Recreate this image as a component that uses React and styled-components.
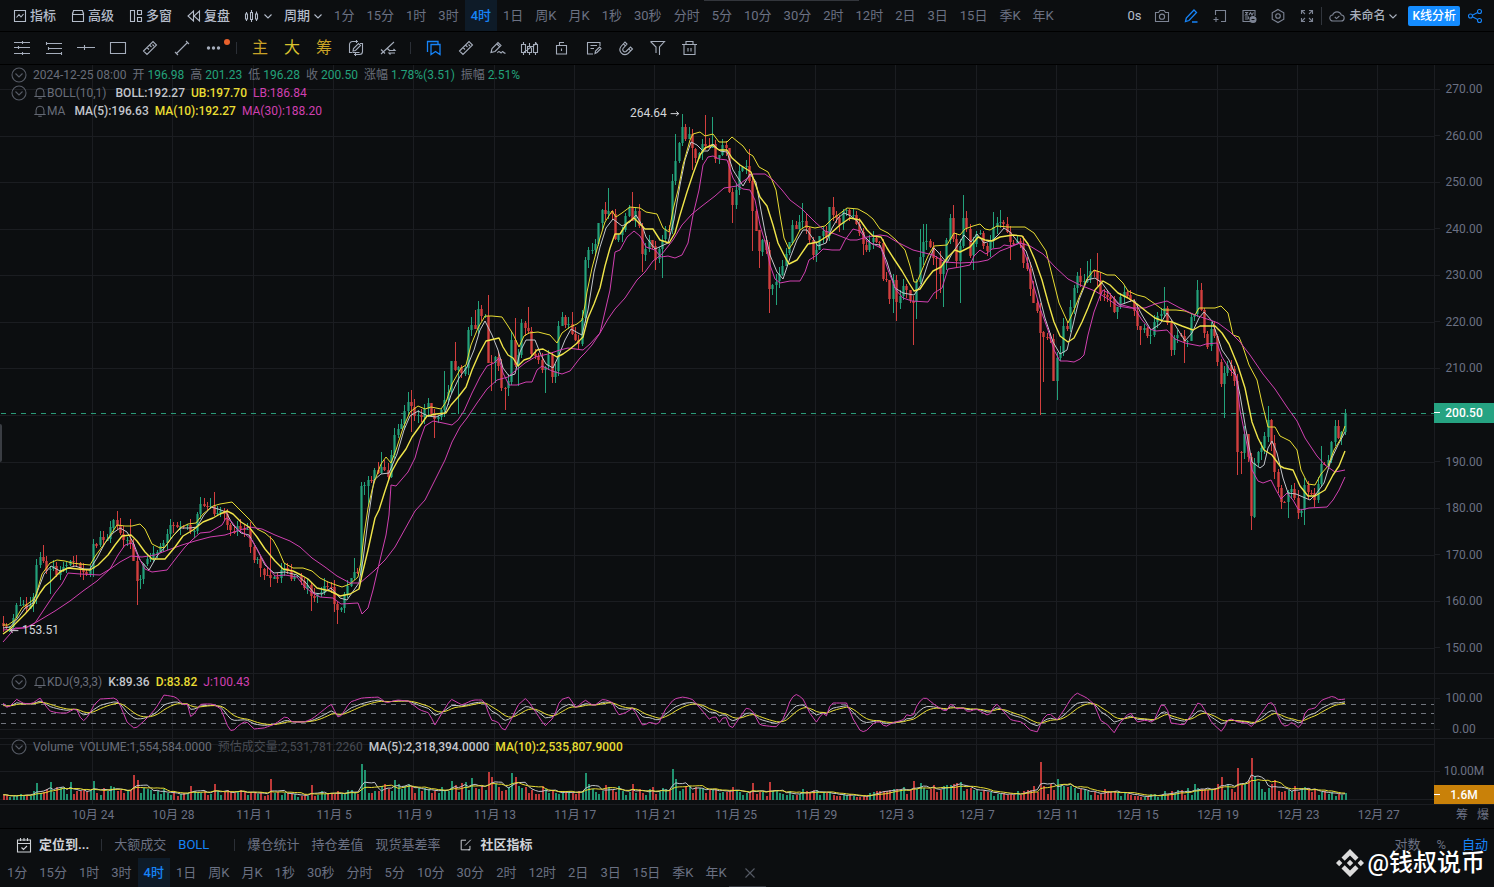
import React, { useState } from "react";
import styled, { createGlobalStyle } from "styled-components";

const GlobalStyle = createGlobalStyle`
    * { box-sizing: border-box; }
    body {
        margin: 0;
        background: #0c0e10;
        font-family: Roboto, "Noto Sans CJK SC", sans-serif;
        font-size: 13px;
        line-height: 18px;
        color: #6b7183;
    }
    button {
        font: inherit;
        color: inherit;
        background: none;
        border: 0;
        padding: 0;
        cursor: pointer;
        white-space: nowrap;
    }
`
const Page = styled.div`
    display: flex;
    flex-direction: column;
    height: 100vh;
    min-height: 500px;
    overflow: hidden;
    position: relative;
`
const TopBar = styled.header`
    display: flex;
    align-items: center;
    height: 32px;
    flex: none;
    padding: 0 11px 0 12px;
    border-bottom: 1px solid #000;
    color: #b4bcca;
`
const MenuGroup = styled.div`
    display: flex;
    align-items: center;
    gap: 14px;
    margin-right: 14px;
`
const MenuButton = styled.button`
    display: flex;
    align-items: center;
    gap: ${props => props.$tight ? 0 : 2}px;
    font-weight: 500;
    font-size: ${props => props.$small ? 12 : 13}px;
`
const DropGroup = styled.div`
    display: flex;
    align-items: center;
    gap: 8px;
    margin-right: 2px;
`
const PeriodList = styled.nav`
    display: flex;
    align-self: stretch;
    color: #6b7183;
`
const PeriodButton = styled.button`
    display: flex;
    align-items: center;
    padding: 0 6px;
    color: ${props => props.$active ? "#1684f8" : "inherit"};
    background: ${props => props.$active ? "#0e1b28" : "none"};
    font-weight: ${props => props.$active ? 500 : 400};
`
const CloseButton = styled(PeriodButton)`
    padding-left: 9px;
    color: #555a64;
`
const TopRight = styled.div`
    display: flex;
    align-items: center;
    margin-left: auto;
    gap: 13px;
`
const IconButton = styled.button`
    display: flex;
    align-items: center;
    justify-content: center;
    color: ${props => props.$color || "#7d8494"};
`
const CloudGroup = styled.div`
    display: flex;
    align-items: center;
    gap: 4px;
    padding-left: 7px;
    border-left: 1px solid #31353c;
    color: #7d8494;
    button { color: #a9b0bd; }
`
const AnalyseButton = styled.button`
    height: 20px;
    padding: 0 4px;
    border-radius: 2px;
    background: #148cff;
    color: #fff;
    font-weight: 500;
    font-size: 12px;
`
const ActionGroup = styled.div`
    display: flex;
    align-items: center;
    gap: 7px;
    margin-left: -7px;
`
const ToolBar = styled.div`
    display: flex;
    align-items: center;
    height: 33px;
    flex: none;
    padding-left: 6px;
    border-bottom: 1px solid #000;
`
const Tool = styled.button`
    position: relative;
    display: flex;
    align-items: center;
    justify-content: center;
    width: 32px;
    height: 32px;
    font-size: 16px;
    color: ${props => props.$color || "#a5adbb"};
`
const RedDot = styled.i`
    position: absolute;
    top: 7px;
    right: 0;
    width: 6px;
    height: 6px;
    border-radius: 50%;
    background: #e8612c;
`
const ToolDivider = styled.div`
    width: 1px;
    height: 12px;
    margin: 0 7px 0 6px;
    background: #2b2f36;
`
const ChartArea = styled.main`
    display: flex;
    flex-direction: column;
    flex: 1;
    min-height: 0;
    font-size: 12px;
`
const Pane = styled.section`
    display: flex;
    flex: ${props => props.$height ? `0 0 ${props.$height}px` : "1 1 0"};
    min-height: 0;
`
const Plot = styled.div`
    position: relative;
    flex: 1;
    min-width: 0;
`
const PlotSvg = styled.svg`
    display: block;
    width: 100%;
    height: 100%;
`
const Axis = styled.div`
    position: relative;
    width: 60px;
    border-left: 1px solid #1b1d21;
    display: grid;
    grid-auto-rows: ${props => props.$row || "1fr"};
    row-gap: ${props => props.$gap || 0}px;
    padding: ${props => props.$pad};
    border-top: ${props => props.$line ? "1px solid #1b1d21" : "0"};
`
const AxisLabel = styled.div`
    display: flex;
    align-items: center;
    padding-right: 6px;
    span { flex: 1; text-align: center; }
    &::before {
        content: "";
        width: 5px;
        height: 1px;
        background: #1b1d21;
    }
`
const ValueTag = styled.div`
    position: absolute;
    left: -1px;
    right: 0;
    top: ${props => props.$top};
    display: flex;
    align-items: center;
    height: ${props => props.$height}px;
    padding-right: 6px;
    background: ${props => props.$color};
    color: #fff;
    font-weight: 500;
    span { flex: 1; text-align: center; }
    &::before {
        content: "";
        width: 6px;
        height: 1px;
        background: #fff;
    }
`
const Legend = styled.div`
    position: absolute;
    top: ${props => props.$top}px;
    left: 11px;
`
const LegendRow = styled.div`
    display: flex;
    align-items: center;
    height: 18px;
    gap: 6px;
    padding-left: ${props => props.$indent ? 22 : 0}px;
    white-space: nowrap;
`
const Fold = styled.button`
    display: flex;
    color: #565b65;
`
const LegendName = styled.span`
    display: flex;
    align-items: center;
    margin-right: ${props => props.$wide ? 3 : 0}px;
    color: #686d79;
`
const LegendValue = styled.span`
    color: ${props => props.$color || "#686d79"};
    font-weight: ${props => props.$bold ? 500 : 400};
    em { font-style: normal; color: #23a27b; }
`
const PriceMark = styled.div`
    position: absolute;
    left: ${props => props.$left};
    top: ${props => props.$top};
    display: flex;
    align-items: center;
    gap: 3px;
    height: 16px;
    color: #d4d6da;
`
const SideHandle = styled.div`
    position: absolute;
    left: 0;
    top: 59%;
    width: 2px;
    height: 38px;
    border-radius: 0 2px 2px 0;
    background: #3a3d43;
`
const TimeAxis = styled.div`
    display: flex;
    align-items: center;
    height: 25px;
    flex: none;
    border-top: 1px solid #1b1d21;
    border-bottom: 1px solid #000;
    padding: 0 0 3px 53px;
`
const TimeLabels = styled.div`
    flex: 1;
    display: grid;
    grid-template-columns: repeat(17, 1fr);
    text-align: center;
    margin-right: 15px;
`
const TimeExtra = styled.div`
    display: flex;
    justify-content: flex-end;
    gap: 9px;
    width: 60px;
    padding-right: 5px;
`
const Footer = styled.footer`
    height: 58px;
    flex: none;
`
const FooterRow = styled.div`
    display: flex;
    align-items: center;
    height: 29px;
    padding: 2px 6px 0 16px;
    gap: 12px;
`
const FooterPeriods = styled.div`
    display: flex;
    height: 29px;
    padding-left: 1px;
`
const FooterLink = styled.button`
    display: flex;
    align-items: center;
    gap: 7px;
    margin-left: ${props => props.$apart ? 7 : 0}px;
    font-weight: ${props => props.$bold ? 700 : 400};
    color: ${props => props.$bold ? "#d0d3d8" : props.$active ? "#1684f8" : "inherit"};
`
const FooterDivider = styled.div`
    width: 1px;
    height: 12px;
    margin-left: ${props => props.$wide ? 13 : 0}px;
    background: #2b2f36;
`
const ScaleGroup = styled.div`
    display: flex;
    gap: 16px;
    margin-left: auto;
`
const ScrollThumb = styled.i`
    position: absolute;
    left: ${props => props.$left};
    width: ${props => props.$width}px;
    height: 1px;
    background: #33363c;
    ${props => props.$bottom ? "bottom: 0;" : "top: 0;"}
`
const Watermark = styled.div`
    position: absolute;
    right: 9px;
    bottom: 7px;
    display: flex;
    align-items: center;
    gap: 3px;
    height: 34px;
    font-size: 24px;
    font-weight: 500;
    color: #fff;
    pointer-events: none;
`

const PERIODOS = ["1分", "15分", "1时", "3时", "4时", "1日", "周K", "月K", "1秒", "30秒", "分时", "5分", "10分", "30分", "2时", "12时", "2日", "3日", "15日", "季K", "年K"]
const DATAS = ["10月 24", "10月 28", "11月 1", "11月 5", "11月 9", "11月 13", "11月 17", "11月 21", "11月 25", "11月 29", "12月 3", "12月 7", "12月 11", "12月 15", "12月 19", "12月 23", "12月 27"]
const PRECOS = [270, 260, 250, 240, 230, 220, 210, 200, 190, 180, 170, 160, 150]

const WHITE = "#c3c6cc"
const YELLOW = "#e9dd33"
const PINK = "#d040b0"
const GREEN = "#23a27b"
const RED = "#d33f3e"
const GRID = "#1b1d21"

// x,y pairs of each curve
const parse = text => text.trim().split(/\s+/).map(p => p.split(",").map(Number))

const CLOSE = parse(`
4,627 8,629 12,622 16,604 20,606 28,606 33,600 36,568 40,558 43,559 47,572 50,570 53,567 57,573 62,570 66,565 72,564 76,563 80,572 84,573 88,571 91,568 93,542 97,547 100,537 104,541 108,537 112,523 116,520 119,530 122,541 126,540 130,539 134,560 137,579 141,576 145,562 150,560 155,549 160,549 165,539 170,528 174,523 178,525 182,529 188,526 192,536 196,520 200,502 204,508 208,503 213,508 216,516 219,510 223,508 227,524 231,532 235,530 239,529 243,528 247,527 250,546 255,561 259,562 264,572 269,580 273,577 277,577 281,570 285,567 290,579 295,576 300,580 304,588 308,584 312,600 316,592 320,590 325,588 330,583 333,599 337,611 341,608 345,593 350,580 354,572 357,578 360,572 361,485
364,488 368,477 371,479 375,470 379,474 383,466 388,478 392,450 395,432 399,430 403,418 407,400 410,402 413,414 418,416 422,414 426,407 430,404 433,422 437,421 441,413 445,401 449,391 452,356 455,370 459,367 463,375 466,368 468,332 472,327 475,329 478,311 481,318 485,312 488,362 492,363 496,353 500,370 503,398 506,388 509,379 512,337 515,366 519,352 522,325 526,330 530,333 533,363 536,351 540,365 544,372 548,350 552,376 556,374 558,329 562,315 566,327 570,325 573,341 577,340 581,341 585,262
588,250 592,252 597,240 601,208 604,215 608,210 612,213 616,245 620,235 624,228 628,205 632,224 636,212 640,230 643,258 647,245 651,238 654,261 658,253 662,240 666,226 669,230 672,187 675,163 678,152 682,123 685,140 689,136 693,152 697,163 700,149 704,143 708,153 712,138 715,162 718,160 722,142 726,150 729,188 733,208 737,187 740,168 744,170 748,168 752,205 756,230 759,256 763,241 766,248 769,286 773,287 777,280 781,272 785,258 788,254 792,226 796,232 800,218 803,220 807,231 811,244 814,261 818,245 822,225 826,239 829,203 832,215 836,214 840,223 845,208 849,214 853,216 857,228 861,236 866,250 871,240 876,239 880,243 883,282 887,281 890,299 894,278 897,303 901,295 905,284 910,298 913,307 916,290 920,256 924,239 928,242 933,257 937,260 941,278
946,243 950,219 953,233 957,260 960,247 963,219 967,228 970,255 974,240 977,235 981,232 985,252 988,247 992,237 994,222 998,221 1002,226 1005,222 1009,240 1013,245 1017,240 1021,243 1024,267 1028,266 1031,292 1035,305 1038,313 1041,337 1045,340 1048,335 1052,345 1054,385 1057,360 1061,350 1064,325 1068,330 1071,302 1075,280 1079,276 1082,283 1085,280 1089,274 1092,271 1096,274 1099,290 1103,296 1107,295 1111,300 1115,318 1119,304 1123,294 1127,294 1132,300 1136,315 1139,332 1143,324 1148,335 1151,332 1155,317 1159,315 1163,307 1167,317 1171,349 1175,336 1180,332 1184,343 1188,341 1191,315 1194,322 1197,287 1200,300 1204,330 1208,345 1211,332 1215,333 1218,363 1221,386 1224,374 1229,361 1232,372 1236,385
1238,454 1241,453 1245,432 1248,456 1251,527 1254,465 1258,452 1262,446 1264,442 1268,420 1272,450 1276,480 1280,500 1284,503 1288,492 1291,485 1294,495 1297,510 1300,515 1303,502 1306,480 1310,498 1313,490 1316,503 1319,475 1322,461 1326,465 1330,452 1334,425 1338,437 1342,430 1345,413`)

// candles with long shadows: x,y of the tip
const WICKS = parse(`
44,545 49,594 117,511 137,605 141,589 130,519 202,497 213,492 270,536 272,587 311,611 338,624 354,558 364,495 368,505 381,452 408,392 411,390 413,432 434,438 445,371 455,342 459,414 474,310 478,301 488,295 491,391 495,383 504,410 515,318 518,386 528,307 545,393 552,383 562,312 571,312 608,188 632,192 642,272 655,270 662,278 675,134 682,114 705,115 712,117 693,170 732,223 749,149 753,251 759,268 769,313 775,305 802,203 832,197 862,255 893,313 897,321 913,345 916,319 920,229 923,224 926,224 936,299 940,293 943,307 953,205 959,303 963,195 973,270 993,212 1000,210 1011,260 1040,415 1043,382 1057,400 1087,261 1091,259 1097,253 1140,345 1164,287 1184,363 1197,280 1201,283 1224,418 1237,475 1241,474 1251,530 1267,406 1277,493 1287,518 1304,525 1322,446 1334,420 1345,409`)

const UPPER = parse(`
3,625 8,625 15,620 22,608 33,600 36,595 42,574 50,563 57,560 65,561 72,563 80,564 90,565 96,555 105,543 117,525 125,526 132,526 140,524 145,529 152,544 160,548 165,547 172,537 180,528 188,524 196,523 203,514 213,506 220,504 226,503 232,502 242,512 250,520 257,529 265,533 273,540 278,549 284,563 293,568 303,568 312,571 320,578 328,582 336,585 342,587 350,584 358,577 361,562 364,535 368,508 372,490 375,480 381,464 386,457 391,463 396,450 403,428 410,412 418,406 425,409 431,407 441,409 446,402 452,384 461,368 466,365 471,345 478,328 485,316 492,316 502,317 508,326 513,334 519,347 524,336 529,333 538,332 550,335 557,343 562,333 570,327 577,324 582,320 585,305 587,292 592,268 600,238 605,222 612,211 616,217 622,213 630,207 640,208 646,212 657,214 663,228 669,232 673,210 678,190 683,165 690,140 693,134 700,132 705,136 713,134 719,142 727,142 732,137 738,142 743,146 748,153 753,156 759,167 768,172 772,180 776,190 780,215 784,238 789,249 795,240 800,230 806,226 815,228 825,226 832,219 838,215 847,208 858,209 867,214 873,219 880,229 888,233 896,240 905,250 910,266 914,282 917,282 922,270 928,256 934,246 947,245 954,233 960,235 965,229 973,226 980,224 985,229 990,230 997,226 1008,227 1025,227 1034,233 1040,242 1046,251 1052,275 1059,303 1068,323 1074,310 1080,295 1087,279 1094,270 1100,272 1107,275 1115,275 1123,283 1128,291 1137,295 1145,297 1155,304 1163,310 1176,310 1185,311 1195,315 1199,308 1215,308 1221,306 1228,313 1233,335 1239,337 1243,347 1249,365 1257,380 1262,403 1268,427 1275,427 1280,436 1290,441 1297,450 1301,470 1308,484 1315,485 1321,474 1328,466 1334,450 1340,440 1345,426`)

const MA10 = parse(`
3,634 10,629 18,621 25,614 33,605 40,593 45,586 50,582 60,572 68,568 78,569 90,570 98,565 108,555 115,545 122,536 131,535 137,541 145,552 152,559 165,559 175,547 183,536 193,530 203,522 213,518 220,514 227,511 233,514 241,522 249,527 257,537 265,549 275,561 283,569 293,571 301,575 308,579 317,588 330,591 340,596 350,594 359,589 362,575 368,550 375,518 379,510 385,491 391,473 398,460 406,449 412,437 420,426 427,416 436,414 446,413 451,405 459,396 466,387 472,370 479,354 486,341 499,338 503,347 508,355 513,358 518,366 524,360 530,358 537,350 543,349 550,353 557,357 563,354 570,349 576,344 583,337 588,318 594,304 600,288 605,266 610,248 615,234 620,234 627,223 634,218 645,229 653,229 660,240 669,243 675,233 680,215 687,192 693,174 700,155 705,148 712,145 719,150 727,150 732,158 740,165 751,172 755,183 760,197 767,206 773,225 778,243 785,257 789,264 797,260 808,244 818,242 829,235 840,225 850,218 860,220 867,230 873,236 881,237 887,248 894,259 902,271 909,283 914,291 920,289 926,280 933,271 941,267 948,257 955,250 960,252 970,247 978,237 985,240 992,241 1000,237 1013,235 1022,236 1028,244 1035,260 1042,280 1048,302 1054,322 1060,336 1068,342 1074,338 1082,322 1088,308 1095,290 1103,281 1110,285 1118,293 1128,298 1137,304 1147,312 1155,318 1163,321 1172,322 1182,326 1193,330 1200,326 1215,326 1222,333 1229,344 1238,366 1245,388 1252,422 1258,438 1264,450 1272,455 1280,466 1284,468 1293,470 1300,486 1308,496 1315,496 1325,490 1333,475 1339,466 1345,451`)

const MA5 = parse(`
3,628 10,627 18,618 25,608 33,603 38,590 44,574 51,566 60,571 68,568 75,566 84,569 90,569 97,558 105,543 113,533 120,528 127,532 133,542 140,560 149,570 157,556 165,547 173,536 181,528 190,528 197,527 204,515 211,507 218,509 226,512 233,525 241,533 249,535 257,549 265,565 274,573 285,572 297,575 306,583 314,593 322,594 331,588 340,598 347,600 354,590 359,583 363,560 368,520 374,480 381,474 389,473 397,454 404,430 410,416 418,411 428,416 436,417 445,413 451,395 459,378 467,367 474,350 480,330 485,321 492,335 498,350 503,368 509,376 515,374 520,352 526,340 535,340 541,355 546,364 553,368 559,355 565,340 571,329 578,333 582,335 588,310 594,272 600,247 606,228 613,219 622,226 630,222 636,215 642,225 646,237 655,249 668,243 674,220 680,185 685,160 691,142 697,145 703,151 708,151 713,144 720,151 727,152 733,170 743,186 750,174 756,182 760,205 765,232 770,255 777,272 783,279 790,258 797,240 803,230 807,230 818,246 826,243 832,228 838,218 844,213 851,216 858,222 865,237 872,244 880,245 887,262 895,288 903,293 914,295 921,285 928,263 934,248 938,252 947,263 953,252 960,242 964,235 971,242 977,234 984,243 993,240 999,234 1004,228 1010,232 1018,242 1026,251 1032,268 1038,290 1045,318 1053,342 1060,354 1067,350 1073,325 1079,300 1087,280 1095,278 1102,283 1110,294 1120,305 1128,302 1134,300 1142,315 1151,330 1160,324 1167,313 1175,325 1185,341 1192,333 1199,318 1204,312 1212,321 1218,338 1222,350 1229,360 1236,376 1240,395 1246,430 1252,462 1260,468 1264,465 1268,448 1272,441 1277,453 1283,478 1288,493 1296,494 1303,497 1310,500 1316,494 1324,483 1331,460 1338,445 1345,432`)

const LOWER = parse(`
3,642 10,634 15,628 25,628 35,623 45,608 55,593 62,584 68,573 80,574 100,575 110,569 118,555 125,545 132,543 138,556 145,569 152,572 167,570 177,557 185,547 192,540 200,533 210,532 222,525 226,518 231,521 238,530 245,534 252,540 258,551 266,565 275,576 285,575 297,577 304,586 311,592 320,597 333,598 341,604 358,603 362,614 368,608 373,590 380,560 386,535 389,515 391,485 396,486 408,472 415,458 420,440 425,426 433,421 443,423 452,425 458,420 464,411 472,393 480,377 487,366 494,363 499,358 503,373 509,385 517,385 526,382 532,382 537,370 542,366 552,371 562,374 570,371 580,358 585,353 592,345 600,333 610,290 615,252 620,250 627,237 634,231 640,236 646,247 655,250 661,257 668,256 675,258 682,255 688,243 693,215 699,190 703,165 708,157 713,156 719,159 727,160 733,178 738,186 743,189 750,190 755,200 760,225 766,245 770,265 775,279 780,283 790,281 800,281 805,272 809,260 817,255 823,249 832,250 840,250 845,240 853,229 860,231 867,241 873,244 881,248 888,270 896,290 903,298 912,301 928,302 934,293 942,288 948,269 960,267 970,265 974,256 980,250 986,254 992,249 1000,248 1004,245 1010,246 1020,243 1026,257 1032,280 1040,308 1048,330 1054,350 1060,361 1067,361 1074,362 1080,359 1084,355 1088,335 1094,312 1100,296 1103,290 1110,294 1118,304 1130,307 1135,309 1142,320 1150,329 1156,331 1167,330 1175,339 1185,343 1200,346 1206,344 1217,343 1222,357 1230,370 1236,376 1240,410 1246,440 1252,470 1258,481 1263,483 1271,480 1276,490 1281,499 1287,493 1293,500 1298,509 1301,510 1309,508 1327,507 1333,500 1339,490 1345,477`)

const MA30 = parse(`
3,630 15,629 28,627 40,620 55,611 70,601 83,591 97,581 110,569 120,562 131,556 142,557 155,555 168,550 182,545 195,541 210,537 225,535 240,530 250,527 262,529 275,535 290,541 300,547 312,558 325,567 337,576 350,583 360,583 375,570 385,560 395,547 400,538 410,520 415,511 425,500 435,480 445,460 452,442 460,427 467,418 477,403 487,389 497,380 508,377 515,371 525,363 535,357 548,354 560,350 568,348 583,350 590,344 600,333 608,319 615,309 625,298 637,280 645,272 653,261 662,254 673,240 682,225 692,214 702,206 715,196 724,188 737,186 745,180 753,174 765,174 773,180 782,190 790,200 802,209 815,222 825,231 835,234 850,240 857,240 867,237 880,235 887,236 897,242 907,247 913,250 933,255 945,262 960,263 978,262 988,260 1000,251 1008,248 1020,243 1030,246 1043,254 1055,267 1068,279 1080,285 1095,291 1108,299 1118,306 1130,308 1145,308 1155,304 1167,301 1180,308 1195,315 1210,320 1218,323 1230,332 1240,342 1250,355 1263,374 1275,389 1287,407 1297,421 1305,438 1317,456 1325,465 1335,472 1345,470`)

const KDJ_J = parse(`
4,703 5,708 10,706 13,703 17,699 22,703 29,704 33,703 40,698 45,705 50,711 58,713 67,713 76,708 80,717 84,721 89,715 94,705 100,699 116,698 121,707 127,722 135,729 143,722 150,715 156,708 164,695 176,697 183,705 188,704 191,718 201,704 213,704 221,709 228,727 232,732 239,725 246,721 254,729 264,728 275,724 286,716 292,722 304,722 312,719 321,712 331,704 339,719 350,702 362,698 379,697 386,703 397,700 408,701 420,710 429,713 435,725 442,713 451,699 462,705 473,700 484,700 491,720 498,722 504,732 511,720 518,705 526,698 533,708 545,726 554,717 560,700 569,697 576,708 585,700 594,706 603,699 612,702 618,715 625,713 633,708 643,726 650,722 658,725 665,710 674,699 683,697 692,699 700,708 710,720 715,715 719,723 725,715 731,730 738,720 747,707 753,712 760,725 776,727 784,718 791,698 797,694 804,700 809,712 817,723 822,712 826,717 831,703 847,703 852,717 861,732 866,731 875,722 880,722 885,727 892,723 903,720 908,713 912,718 918,703 925,697 935,705 946,712 951,703 958,710 962,707 968,712 976,709 989,716 996,703 1004,712 1011,720 1022,722 1030,730 1038,732 1042,720 1049,713 1057,720 1064,710 1072,697 1077,693 1087,698 1095,705 1100,720 1108,725 1114,733 1120,723 1130,712 1137,722 1146,720 1153,723 1162,703 1167,708 1171,723 1184,725 1191,715 1199,701 1206,712 1212,723 1222,732 1229,718 1238,722 1247,723 1252,727 1260,715 1270,701 1275,707 1280,722 1286,727 1292,722 1300,729 1306,710 1315,708 1322,700 1333,696 1339,700 1345,699`)

const VOLUME_BASE = parse(`4,4 25,5 40,10 90,10 130,12 160,8 220,9 300,5 350,9 380,14 420,11 450,15 500,16 540,11 575,6 600,12 640,9 680,12 720,9 740,7 800,9 850,5 880,7 920,12 960,13 1000,6 1030,10 1060,13 1090,9 1140,5 1180,8 1230,14 1260,15 1290,11 1345,7`)
const VOLUME_PEAKS = parse(`37,17 50,18 70,18 93,19 133,25 136,20 191,14 213,16 271,21 311,15 361,36 364,30 395,20 451,19 471,22 488,28 491,23 512,27 515,23 585,27 588,16 633,16 672,31 675,21 732,13 753,17 769,18 913,19 920,17 953,16 960,18 1033,14 1040,38 1057,21 1194,16 1221,23 1238,32 1251,42 1254,24 1257,18 1274,20 1304,13`)

const TOTAL = 402
const STEP = 3.346
const barX = i => 3.3 + i * STEP
const barAt = x => Math.min(TOTAL - 1, Math.round((x - 3.3) / STEP))

const noise = n => {
    const v = Math.sin(n * 12.9898 + 4.1) * 43758.5453
    return v - Math.floor(v)
}
const valueAt = (points, x) => {
    if (x <= points[0][0]) return points[0][1]
    for (let i = 1; i < points.length; i++) {
        const [x1, y1] = points[i]
        if (x <= x1) {
            const [x0, y0] = points[i - 1]
            return y0 + (y1 - y0) * (x - x0) / (x1 - x0)
        }
    }
    return points[points.length - 1][1]
}

const bars = Array.from({ length: TOTAL }, (_, i) => {
    const close = valueAt(CLOSE, barX(i)) + (i < TOTAL - 1 ? (noise(i) - 0.5) * 6 : 0)
    return { x: Math.floor(barX(i)), close }
})
bars.forEach((bar, i) => {
    bar.open = i ? bars[i - 1].close : bar.close - 3
    bar.up = bar.close < bar.open
    bar.high = Math.min(bar.open, bar.close) - noise(i + 900) * 8
    bar.low = Math.max(bar.open, bar.close) + noise(i + 500) * 8
    bar.volume = valueAt(VOLUME_BASE, barX(i)) * (0.5 + noise(i + 77) * 0.85)
})
WICKS.forEach(([x, y]) => {
    const bar = bars[barAt(x)]
    if (y < (bar.open + bar.close) / 2) bar.high = y
    else bar.low = y
})
VOLUME_PEAKS.forEach(([x, h]) => { bars[barAt(x)].volume = h })

const wickPath = up => bars.filter(b => b.up === up).map(b => `M${b.x + 0.5} ${Math.round(b.high)}V${Math.round(b.low)}`).join("")
const bodyPath = up => bars.filter(b => b.up === up).map(b => {
    const top = Math.round(Math.min(b.open, b.close))
    return `M${b.x - 1} ${top}h3v${Math.max(1, Math.round(Math.abs(b.open - b.close)))}h-3z`
}).join("")
const volumePath = up => bars.filter(b => b.up === up).map(b => `M${b.x} 800h2v-${Math.max(2, Math.round(b.volume))}h-2z`).join("")

const average = size => bars.map((b, i) => {
    const part = bars.slice(Math.max(0, i - size + 1), i + 1)
    return [barX(i), 800 - part.reduce((sum, p) => sum + p.volume, 0) / part.length]
})

// D comes from smoothing, K = (J + 2D) / 3
const kdj = { j: [], k: [], d: [] }
let lastD = 706
bars.forEach((b, i) => {
    const x = barX(i)
    const j = valueAt(KDJ_J, x)
    lastD = (6 * lastD + j) / 7
    kdj.j.push([x, j])
    kdj.d.push([x, lastD])
    kdj.k.push([x, (j + 2 * lastD) / 3])
})

const Curve = ({ points, color, width = 1 }) => (
    <polyline points={points.map(p => `${p[0]},${p[1].toFixed(1)}`).join(" ")} fill="none" stroke={color} strokeWidth={width} strokeLinejoin="round" vectorEffect="non-scaling-stroke" />
)

const Grid = ({ top, bottom, lines }) => (
    <path
        d={DATAS.map((_, i) => `M${Math.round(92 + i * 80.33) + 0.5} ${top}V${bottom}`).join("") + lines.map(y => `M0 ${y + 0.5}H1434`).join("")}
        stroke={GRID}
        fill="none"
        shapeRendering="crispEdges"
    />
)

const ICONS = {
    indicator: <path d="M2.500 2.500h11v11h-11zM4.500 9.500l2.500-3 2 2.500 2.500-3" />,
    box: <path d="M2.500 6.500h11v7h-11zM2.500 6.500l1-4h9l1 4M2.500 4.500v2M13.500 4.500v2" />,
    windows: <path d="M2.500 2.500h4v11h-4zM9.500 2.500h4v4h-4zM9.500 9.500h4v4h-4z" />,
    rewind: <path d="M7.500 3v10L2 8zM13.500 3v10L8 8z" />,
    candles: <path d="M1.500 6h2v5h-2zM2.500 4v2M2.500 11v2M6.500 4.500h2v7h-2zM7.500 2v2.500M7.500 11.500V14M11.500 6h2v5h-2zM12.500 3.500V6M12.500 11v2" />,
    chevron: <path d="M4.500 6.500L8 10l3.500-3.500" />,
    camera: <><path d="M1.500 4.500h3L6 2.500h4l1.500 2h3v9h-13z" /><circle cx="8" cy="8.700" r="2.600" /></>,
    pencil: <path d="M2.500 13.500l.8-3.500L11 2l2.500 2.500-7.500 8zM9 14h5.500" strokeWidth="1.300" />,
    addPane: <path d="M3.500 7V2.500h10v11H9M1.500 11.500h5M4 9v5" />,
    list: <><path d="M14 8V2.500H2v11h7M4 4.500h2.500L4.500 7H7M8 7l1.500-2.500L11 7l1.500-2.500M4 9h4M4 11h3l1-1.500" /><circle cx="12" cy="11.500" r="3" fill="currentColor" /><path d="M10.500 11.500h3" stroke="#0c0e10" /></>,
    hexagon: <><path d="M8 1.500l5.800 3.300v6.400L8 14.500l-5.800-3.300V4.800z" /><circle cx="8" cy="8" r="2.300" /></>,
    expand: <path d="M2.500 6V2.500H6M2.500 2.500l3.500 3.500M10 2.500h3.500V6M13.500 2.500L10 6M2.500 10v3.500H6M2.500 13.500L6 10M10 13.500h3.500V10M13.500 13.500L10 10" />,
    cloud: <path d="M4 13a3 3 0 0 1-.3-6 4.500 4.500 0 0 1 8.600 0A3 3 0 0 1 12 13zM5.800 9l1.700 1.600L10.400 8" />,
    share: <><circle cx="3.500" cy="8" r="2" /><circle cx="12.500" cy="3.500" r="2" /><circle cx="12.500" cy="12.500" r="2" /><path d="M5.300 7.200l5.400-2.800M5.300 8.800l5.400 2.800" /></>,
    threeLines: <path d="M0 2.500h16M0 7.500h16M0 13.500h16M8.500 1v3M4.500 6v3M8.500 12v3" />,
    rays: <path d="M0 3.500h16M2 8.500h14M0 13.500h16M.5 2v3M2.500 7v3M15.500 12v3" />,
    level: <path d="M-1 7.500h18M6.500 5v5" />,
    rect: <path d="M.5 2.500h15v11H.5z" />,
    ruler: <path d="M1.500 11L11 1.500 14.500 5 5 14.500zM7.500 5l2 2M5 7.500l2 2M10.500 4.500l1.500 1.500" />,
    segment: <path d="M2.500 13.500l11-11M1 12l3 3M12 1l3 3" />,
    dots: <g fill="currentColor" stroke="none"><circle cx="2.500" cy="8" r="1.700" /><circle cx="7.500" cy="8" r="1.700" /><circle cx="12.500" cy="8" r="1.700" /></g>,
    loopEdit: <path d="M4 12.500H1.500v-8a3 3 0 0 1 3-3H10M8.500 0v3M12 3.500h2.500v8a3 3 0 0 1-3 3H6M7.500 13v3M5 11l.5-2.500 5-5 2 2-5 5zM4.500 12.500h7" />,
    swapLine: <path d="M1 14L14 2M1 9.500l4 4M7 8l3 3M9 10.500h6l-1.500-1.500M15 13H9l1.500 1.500" />,
    bookmark: <path d="M5 4.500h9v10l-4.500-3-4.500 3zM1.500 12V1.500H12V4" strokeWidth="1.300" />,
    scribble: <path d="M1 12.500l1-4 6-6 3 3-6 6zM7 4l3 3M7.500 13c2-4 3 2 4.500-1 1-2 1.500 2 3.500 1" />,
    compare: <path d="M-.5 4.500h4v8h-4zM1.500 2v2.500M1.500 12.500v2.500M5.500 6.500h4v6h-4zM7.500 3v3.500M7.500 12.500v2.500M11.500 4.500h4v8h-4zM13.500 2v2.500M13.500 12.500v2.500M2 12L15 3" />,
    lock: <path d="M2.500 5.500h10v8.500h-10zM5.500 5.500v-3H10M7.500 8.500v2.500" />,
    note: <path d="M14 6V2.500H1.500v11.500H7M4.500 5.500h6.500M4.500 8.500h3.500M9 13.500l.5-2.500 4-4 1.500 1.500-4 4z" />,
    magnet: <path d="M7 2L3 6.500a5 5 0 0 0 7 7L14.500 9l-2-2L8 11.500A2.200 2.200 0 0 1 5 8.500L9 4zM5.500 4l2 1.800M11 9l1.800 2" />,
    filter: <path d="M.5 1.500h14L9.500 7v8M.5 1.500L6 7v6" />,
    trash: <path d="M0 4.500h15M4 4.500v-3h7v3M2 4.500v10h11v-10M6 8v3.500M9 8v3.500" />,
    fold: <><circle cx="8" cy="8" r="7" /><path d="M4.500 6.500L8 10l3.500-3.500" /></>,
    bell: <path d="M1.500 12h13M3.500 12V7a4.500 4.500 0 0 1 9 0v5M6 14h4" />,
    calendar: <path d="M1.500 3h13v12h-13zM1.500 6.500h13M4.500 1v3M8 1v3M11.500 1v3M5.500 10.500l2 2 3.500-3.500" />,
    external: <path d="M8 2.500H2.500v11h10V9M7 8.500L13.500 2M10.500 13.500h2" />,
    close: <path d="M3.500 3.500l9 9M12.500 3.500l-9 9" />,
    arrowRight: <path d="M1 9h13M10 5.500L14 9l-4 3.500" strokeWidth="1.600" />,
    arrowLeft: <path d="M15 9H2M6 5.500L2 9l4 3.500" strokeWidth="1.600" />,
}
const Icon = ({ name, size = 16 }) => (
    <svg width={size} height={size} viewBox="0 0 16 16" fill="none" stroke="currentColor" strokeWidth="1.100" overflow="visible" aria-hidden="true">
        {ICONS[name]}
    </svg>
)

const TOOLS = [
    ["threeLines", "rays", "level", "rect", "ruler", "segment", "dots"],
    ["主", "大", "筹", "loopEdit", "swapLine"],
    ["bookmark", "ruler", "scribble", "compare", "lock", "note", "magnet", "filter", "trash"],
]
const toolColor = name => {
    if (name === "bookmark") return "#1684f8"
    if (name === "大") return "#d9c22e"
    return ICONS[name] ? undefined : "#c9a227"
}

const Periods = ({ active, onPick }) => PERIODOS.map(name => (
    <PeriodButton key={name} type="button" $active={name === active} onClick={() => onPick(name)}>{name}</PeriodButton>
))

const Header = ({ period, setPeriod }) => (
    <TopBar>
        <MenuGroup>
            <MenuButton type="button"><Icon name="indicator" />指标</MenuButton>
            <MenuButton type="button"><Icon name="box" />高级</MenuButton>
            <MenuButton type="button"><Icon name="windows" />多窗</MenuButton>
            <MenuButton type="button"><Icon name="rewind" />复盘</MenuButton>
        </MenuGroup>
        <DropGroup>
            <MenuButton type="button" aria-label="K线" $tight><Icon name="candles" /><Icon name="chevron" /></MenuButton>
            <MenuButton type="button" $tight>周期<Icon name="chevron" /></MenuButton>
        </DropGroup>
        <PeriodList><Periods active={period} onPick={setPeriod} /></PeriodList>
        <TopRight>
            <span>0s</span>
            <IconButton type="button" aria-label="camera"><Icon name="camera" /></IconButton>
            <IconButton type="button" aria-label="draw" $color="#1684f8"><Icon name="pencil" /></IconButton>
            <IconButton type="button" aria-label="add"><Icon name="addPane" /></IconButton>
            <IconButton type="button" aria-label="list"><Icon name="list" /></IconButton>
            <IconButton type="button" aria-label="settings"><Icon name="hexagon" /></IconButton>
            <IconButton type="button" aria-label="fullscreen"><Icon name="expand" /></IconButton>
            <ActionGroup>
                <CloudGroup>
                    <Icon name="cloud" />
                    <MenuButton type="button" $small $tight>未命名<Icon name="chevron" /></MenuButton>
                </CloudGroup>
                <AnalyseButton type="button">K线分析</AnalyseButton>
                <IconButton type="button" aria-label="share" $color="#1684f8"><Icon name="share" /></IconButton>
            </ActionGroup>
        </TopRight>
    </TopBar>
)

const DrawTools = () => (
    <ToolBar>
        {TOOLS.map((group, i) => (
            <React.Fragment key={i}>
                {i > 0 && <ToolDivider />}
                {group.map(name => (
                    <Tool key={name} type="button" aria-label={name} $color={toolColor(name)}>
                        {ICONS[name] ? <Icon name={name} /> : name}
                        {name === "dots" && <RedDot />}
                    </Tool>
                ))}
            </React.Fragment>
        ))}
    </ToolBar>
)

const FoldButton = () => <Fold type="button" aria-label="fold"><Icon name="fold" /></Fold>

const MainPane = () => (
    <Pane>
        <Plot>
            <PlotSvg viewBox="0 65 1434 608" preserveAspectRatio="none">
                <Grid top={65} bottom={673} lines={PRECOS.map((_, i) => Math.round(89 + i * 46.58))} />
                <path d="M1 413.500H1434" stroke="#2b9a78" strokeDasharray="5 5" shapeRendering="crispEdges" />
                <g shapeRendering="crispEdges">
                    <path d={bodyPath(true)} fill={GREEN} opacity="0.600" />
                    <path d={bodyPath(false)} fill={RED} opacity="0.700" />
                    <path d={wickPath(true)} stroke={GREEN} />
                    <path d={wickPath(false)} stroke={RED} />
                </g>
                <Curve points={MA5} color={WHITE} />
                <Curve points={UPPER} color={YELLOW} />
                <Curve points={LOWER} color={PINK} />
                <Curve points={MA30} color={PINK} />
                <Curve points={MA10} color="#f0e54a" width={1.4} />
            </PlotSvg>
            <Legend $top={1}>
                <LegendRow>
                    <FoldButton />
                    <LegendValue>2024-12-25 08:00</LegendValue>
                    <LegendValue>开 <em>196.98</em></LegendValue>
                    <LegendValue>高 <em>201.23</em></LegendValue>
                    <LegendValue>低 <em>196.28</em></LegendValue>
                    <LegendValue>收 <em>200.50</em></LegendValue>
                    <LegendValue>涨幅 <em>1.78%(3.51)</em></LegendValue>
                    <LegendValue>振幅 <em>2.51%</em></LegendValue>
                </LegendRow>
                <LegendRow>
                    <FoldButton />
                    <LegendName $wide><Icon name="bell" size={14} />BOLL(10,1)</LegendName>
                    <LegendValue $color={WHITE} $bold>BOLL:192.27</LegendValue>
                    <LegendValue $color={YELLOW} $bold>UB:197.70</LegendValue>
                    <LegendValue $color={PINK}>LB:186.84</LegendValue>
                </LegendRow>
                <LegendRow $indent>
                    <LegendName $wide><Icon name="bell" size={14} />MA</LegendName>
                    <LegendValue $color={WHITE} $bold>MA(5):196.63</LegendValue>
                    <LegendValue $color={YELLOW} $bold>MA(10):192.27</LegendValue>
                    <LegendValue $color={PINK}>MA(30):188.20</LegendValue>
                </LegendRow>
            </Legend>
            <PriceMark $left="43.930%" $top="6.600%">264.64<Icon name="arrowRight" size={10} /></PriceMark>
            <PriceMark $left="0.630%" $top="91.600%"><Icon name="arrowLeft" size={10} />153.51</PriceMark>
            <SideHandle />
        </Plot>
        <Axis $pad="1px 0 2px">
            {PRECOS.map(price => <AxisLabel key={price}><span>{price !== 200 && price.toFixed(2)}</span></AxisLabel>)}
            <ValueTag $top="55.590%" $height={20} $color="#26a382"><span>200.50</span></ValueTag>
        </Axis>
    </Pane>
)

const KdjPane = () => (
    <Pane $height={65}>
        <Plot>
            <PlotSvg viewBox="0 673 1434 65" preserveAspectRatio="none">
                <Grid top={673} bottom={738} lines={[673, 698, 729]} />
                <path d="M1 704.500H1434M1 713.500H1434M1 723.500H1434" stroke="#70747c" strokeDasharray="5 5" shapeRendering="crispEdges" />
                <Curve points={kdj.k} color={WHITE} />
                <Curve points={kdj.d} color={YELLOW} />
                <Curve points={kdj.j} color={PINK} />
            </PlotSvg>
            <Legend $top={0}>
                <LegendRow>
                    <FoldButton />
                    <LegendName><Icon name="bell" size={14} />KDJ(9,3,3)</LegendName>
                    <LegendValue $color={WHITE} $bold>K:89.36</LegendValue>
                    <LegendValue $color={YELLOW} $bold>D:83.82</LegendValue>
                    <LegendValue $color={PINK}>J:100.43</LegendValue>
                </LegendRow>
            </Legend>
        </Plot>
        <Axis $pad="15px 0 0" $row="18px" $gap={13} $line>
            <AxisLabel><span>100.00</span></AxisLabel>
            <AxisLabel><span>0.00</span></AxisLabel>
        </Axis>
    </Pane>
)

const VolumePane = () => (
    <Pane $height={66}>
        <Plot>
            <PlotSvg viewBox="0 738 1434 66" preserveAspectRatio="none">
                <Grid top={738} bottom={804} lines={[738, 744, 771, 799]} />
                <g shapeRendering="crispEdges">
                    <path d={volumePath(true)} fill={GREEN} opacity="0.900" />
                    <path d={volumePath(false)} fill={RED} opacity="0.900" />
                </g>
                <Curve points={average(5)} color={WHITE} />
                <Curve points={average(10)} color={YELLOW} />
            </PlotSvg>
            <Legend $top={0}>
                <LegendRow>
                    <FoldButton />
                    <LegendValue>Volume</LegendValue>
                    <LegendValue>VOLUME:1,554,584.0000</LegendValue>
                    <LegendValue $color="#484c54">预估成交量:2,531,781.2260</LegendValue>
                    <LegendValue $color={WHITE} $bold>MA(5):2,318,394.0000</LegendValue>
                    <LegendValue $color={YELLOW} $bold>MA(10):2,535,807.9000</LegendValue>
                </LegendRow>
            </Legend>
        </Plot>
        <Axis $pad="23px 0 0" $row="18px" $line>
            <AxisLabel><span>10.00M</span></AxisLabel>
            <ValueTag $top="46px" $height={19} $color="#c98109"><span>1.6M</span></ValueTag>
        </Axis>
    </Pane>
)

const BottomBar = ({ period, setPeriod }) => (
    <Footer>
        <FooterRow>
            <FooterLink type="button" $bold><Icon name="calendar" />定位到...</FooterLink>
            <FooterDivider />
            <FooterLink type="button">大额成交</FooterLink>
            <FooterLink type="button" $active>BOLL</FooterLink>
            <FooterDivider $wide />
            <FooterLink type="button">爆仓统计</FooterLink>
            <FooterLink type="button">持仓差值</FooterLink>
            <FooterLink type="button">现货基差率</FooterLink>
            <FooterLink type="button" $bold $apart><Icon name="external" size={14} />社区指标</FooterLink>
            <ScaleGroup>
                <FooterLink type="button">对数</FooterLink>
                <FooterLink type="button">%</FooterLink>
                <FooterLink type="button" $active>自动</FooterLink>
            </ScaleGroup>
        </FooterRow>
        <FooterPeriods>
            <Periods active={period} onPick={setPeriod} />
            <CloseButton type="button" aria-label="close"><Icon name="close" /></CloseButton>
        </FooterPeriods>
    </Footer>
)

export default function App() {
    const [period, setPeriod] = useState("4时")
    return (
        <>
            <GlobalStyle />
            <Page>
                <Header period={period} setPeriod={setPeriod} />
                <DrawTools />
                <ChartArea>
                    <MainPane />
                    <KdjPane />
                    <VolumePane />
                    <TimeAxis>
                        <TimeLabels>{DATAS.map(data => <span key={data}>{data}</span>)}</TimeLabels>
                        <TimeExtra><span>筹</span><span>爆</span></TimeExtra>
                    </TimeAxis>
                </ChartArea>
                <BottomBar period={period} setPeriod={setPeriod} />
                <ScrollThumb $left="47.100%" $width={155} />
                <ScrollThumb $left="48.800%" $width={37} $bottom />
                <Watermark>
                    <svg width="28" height="28" viewBox="0 0 28 28" fill="#dcdcdc" aria-hidden="true">
                        <path d="M14 0l8.500 8.500-3.200 3.200L14 6.400l-5.300 5.300-3.200-3.200zM14 28l8.500-8.500-3.200-3.200L14 21.600l-5.300-5.300-3.200 3.200zM14 10.800l3.200 3.200-3.200 3.200-3.200-3.200zM3.200 10.800L6.400 14l-3.200 3.200L0 14zM24.800 10.800L28 14l-3.200 3.200-3.200-3.200z" />
                    </svg>
                    @钱叔说币
                </Watermark>
            </Page>
        </>
    )
}
